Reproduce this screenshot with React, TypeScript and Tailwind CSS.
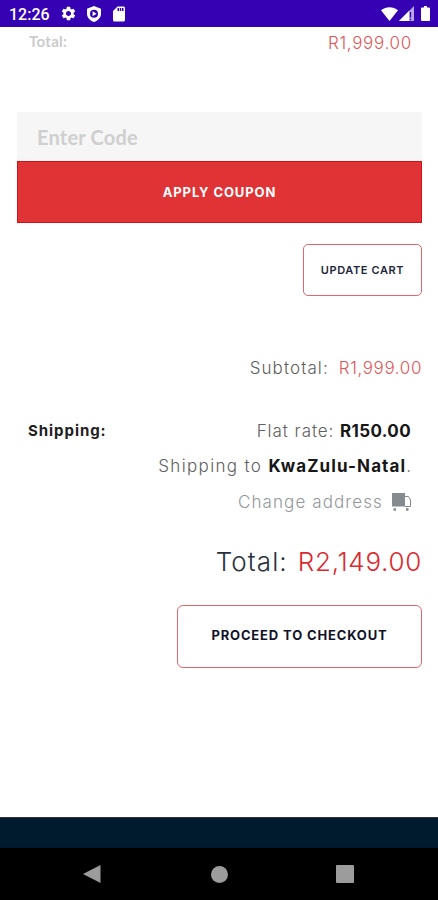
import { MdSettings, MdSdCard } from "react-icons/md";

const StatusBar = () => {
  return (
    <header className="flex h-[27px] items-center bg-[#3600b3] pl-[9px] pr-[8px] text-white">
      <span className="w-[51px] whitespace-nowrap pt-[2px] font-[Roboto,sans-serif] text-[16px] font-medium leading-none">12:26</span>
      <MdSettings className="size-[17px]" />
      <svg viewBox="0 0 16 16" className="ml-[9px] size-[16px]">
        <path fill="currentColor" fillRule="evenodd" d="M8 0l7 2.800v5C15 11.700 12 14.800 8 16 4 14.800 1 11.700 1 7.800v-5zM8 3.800a4 4 0 100 8 4 4 0 000-8zM6.600 5.300l4 2.500-4 2.500z" />
      </svg>
      <MdSdCard className="ml-[8px] size-[18px]" />
      <div className="ml-auto flex items-center">
        <svg viewBox="0 0 17 14" className="h-[14px] w-[17px]">
          <path fill="currentColor" d="M0 3.300C5-.900 12-.900 17 3.300L8.500 14z" />
        </svg>
        <svg viewBox="0 0 15 15" className="ml-[1px] h-[15px] w-[15px]">
          <path fill="currentColor" fillOpacity=".65" d="M15 0v15H0z" />
          <path fill="currentColor" d="M10 5v10H0z" />
          <path stroke="#3600b3" strokeWidth="1.300" d="M11.500 6v5.500M11.500 12.800v1.500" />
        </svg>
        <svg viewBox="0 0 9 15" className="ml-[7px] h-[15px] w-[9px]">
          <path fill="currentColor" d="M3 0h3v1.500h2a1 1 0 011 1V14a1 1 0 01-1 1H1a1 1 0 01-1-1V2.500a1 1 0 011-1h2z" />
        </svg>
      </div>
    </header>
  );
};

const TruckIcon = () => {
  return (
    <svg viewBox="0 0 19 18" className="h-[18px] w-[19px]">
      <path fill="#858b90" d="M0 0h13v13.500H0zM1.500 15.200H4v2.500H1.500zM14 15.200h2.500v2.500H14z" />
      <path fill="none" stroke="#858b90" d="M13 3.500h3.500l2 3.500v6.500H13" />
    </svg>
  );
};

const NavigationBar = () => {
  return (
    <nav className="flex h-[52px] items-center justify-between bg-black pl-[83px] pr-[84px] text-[#9c9c9c]">
      <svg viewBox="0 0 18 18" className="size-[18px]">
        <path fill="currentColor" d="M17.500 0v18L0 9z" />
      </svg>
      <span className="ml-[1px] size-[17px] rounded-full bg-current" />
      <span className="size-[18px] rounded-[1px] bg-current" />
    </nav>
  );
};

export default function App() {
  return (
    <div className="flex h-[900px] w-[438px] flex-col overflow-hidden bg-white font-[Inter,sans-serif] whitespace-nowrap">
      <StatusBar />

      <main className="flex flex-1 flex-col pl-[17px] pr-[16px]">
        <div className="flex h-[31px] items-center justify-between pl-[12px] pr-[10px]">
          <span className="pb-[2px] font-[Lato,sans-serif] text-[15px] font-bold tracking-[0.3px] text-[#cbcbcb]">Total:</span>
          <span className="pt-[3px] text-[17px] font-light tracking-[0.7px] text-[#e05658]">R1,999.00</span>
        </div>

        <form className="mt-[54px]" onSubmit={(e) => e.preventDefault()}>
          <input
            type="text"
            placeholder="Enter Code"
            className="block h-[49px] w-full bg-[#f6f6f6] px-[20px] font-[Lato,sans-serif] text-[20px] font-bold tracking-[0.2px] outline-none placeholder:text-[#cfcfcf]"
          />
          <button className="h-[62px] w-full border border-[#d31217] bg-[#df3335] pt-[2px] text-[13px] font-bold tracking-[0.9px] text-white">
            APPLY COUPON
          </button>
        </form>

        <button className="mt-[21px] h-[52px] w-[119px] self-end rounded-[5px] border border-[#e1666d] text-[11px] font-semibold tracking-[0.6px] text-[#22263a]">
          UPDATE CART
        </button>

        <div className="mt-[58px] flex h-[30px] items-center justify-end gap-[10px] text-[17px]">
          <span className="font-light tracking-[1.1px] text-[#606060]">Subtotal:</span>
          <span className="font-light tracking-[0.6px] text-[#e05658]">R1,999.00</span>
        </div>

        <section className="mt-[29px] flex justify-between pl-[11px] pr-[11px] text-[17px] leading-[36px]">
          <h2 className="text-[15px] font-bold tracking-[0.95px] text-[#202020]">Shipping:</h2>
          <div className="flex flex-col items-end font-light text-[#606060]">
            <p>
              <span className="tracking-[0.95px]">Flat rate: </span>
              <strong className="font-bold tracking-[0.35px] text-[#171717]">R150.00</strong>
            </p>
            <p className="leading-[35px]">
              <span className="tracking-[1.35px]">Shipping to </span>
              <strong className="font-bold tracking-[1.1px] text-[#171717]">KwaZulu-Natal</strong>.
            </p>
            <a className="flex items-center gap-[9px] text-[#92979b]">
              <span className="tracking-[1.1px]">Change address</span>
              <TruckIcon />
            </a>
          </div>
        </section>

        <div className="mt-[21px] flex h-[40px] items-center justify-end gap-[10px] text-[26px] font-light">
          <span className="tracking-[1.1px] text-[#26313e]">Total:</span>
          <span className="tracking-[0.7px] text-[#dc292e]">R2,149.00</span>
        </div>

        <button className="mt-[24px] h-[63px] w-[245px] self-end rounded-[6px] border border-[#e1666d] pb-[2px] text-[13px] font-bold tracking-[0.85px] text-[#111329]">
          PROCEED TO CHECKOUT
        </button>
      </main>

      <div className="h-[31px] border-t border-[#30343a] bg-[#001b2e]" />
      <NavigationBar />
    </div>
  );
}
